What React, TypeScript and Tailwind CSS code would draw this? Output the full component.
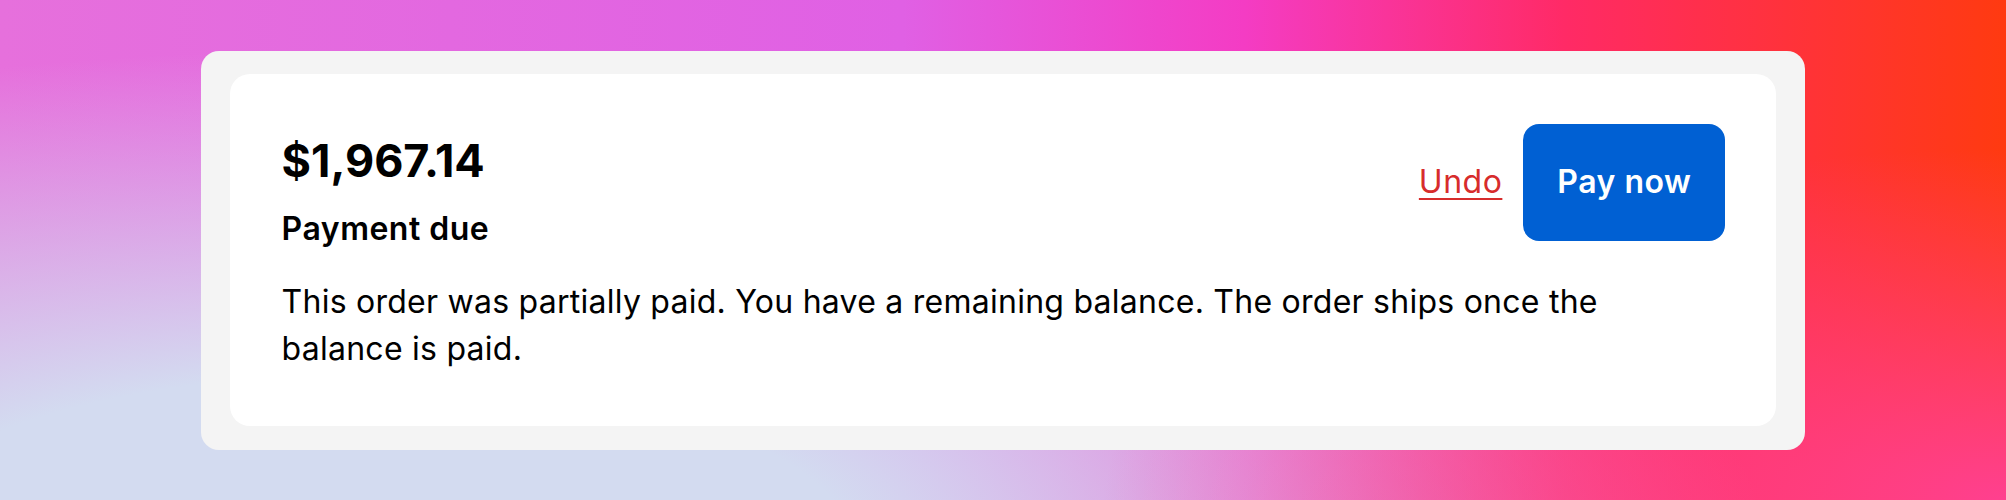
import React from "react";

export default function App() {
  return (
    <div className="w-full h-[500px] flex items-center justify-center font-['Inter',sans-serif] bg-[radial-gradient(ellipse_45%_70%_at_100%_100%,rgba(255,64,150,0.95)_0%,rgba(255,64,150,0)_100%),radial-gradient(ellipse_70%_100%_at_18%_110%,#d3dbf0_35%,rgba(211,219,240,0)_100%),linear-gradient(90deg,#e670dc_0%,#e060e4_45%,#f43cc4_62%,#ff2a66_78%,#ff3a10_100%)]">
      <div className="w-4/5 bg-[#f4f4f4] rounded-[18px] px-[29px] pt-[23px] pb-[24px]">
        <div className="bg-white rounded-[20px] pl-[52px] pr-[51px] pt-[50px] pb-[54px] text-black">
          <div className="flex items-start justify-between">
            <div className="flex flex-col pt-[11px]">
              <div className="text-[45px] leading-[52px] font-bold">$1,967.14</div>
              <div className="mt-[22px] text-[32px] leading-[40px] font-semibold tracking-[0.5px]">Payment due</div>
            </div>
            <div className="flex items-center gap-[21px]">
              <button className="text-[32px] leading-[40px] tracking-[0.5px] text-[#d72c2c] underline underline-offset-[5px] decoration-[2px]">
                Undo
              </button>
              <button className="h-[117px] px-[34px] rounded-[16px] bg-[#0060d3] text-white text-[32px] font-semibold tracking-[0.5px]">
                Pay now
              </button>
            </div>
          </div>
          <p className="mt-[29px] max-w-[1380px] text-[32px] leading-[47px] tracking-[0.25px]">
            This order was partially paid. You have a remaining balance. The order ships once the balance is paid.
          </p>
        </div>
      </div>
    </div>
  );
}
